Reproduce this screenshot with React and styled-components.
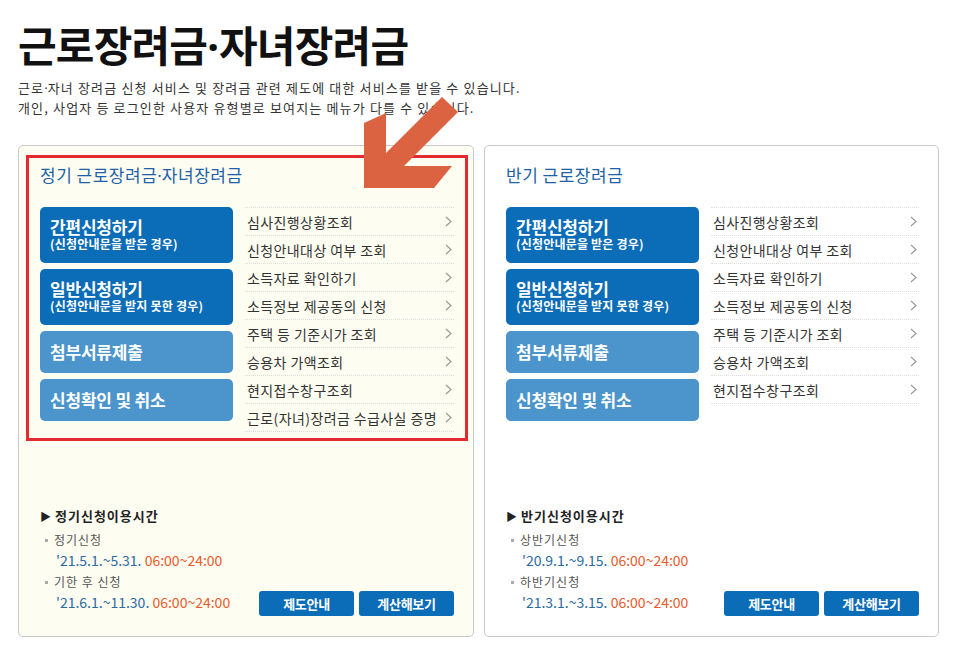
import React from 'react'
import styled, { createGlobalStyle } from 'styled-components'

const GlobalStyle = createGlobalStyle`
  body {
    margin: 0;
    background: #fff;
    font-family: "Noto Sans CJK KR", "Noto Sans", sans-serif;
    color: #333;
  }
`

const cards = [
  {
    title: ['정기 근로장려금', '자녀장려금'],
    bg: '#fefdf1',
    highlight: true,
    links: [
      '심사진행상황조회',
      '신청안내대상 여부 조회',
      '소득자료 확인하기',
      '소득정보 제공동의 신청',
      '주택 등 기준시가 조회',
      '승용차 가액조회',
      '현지접수창구조회',
      '근로(자녀)장려금 수급사실 증명',
    ],
    infoTitle: '정기신청이용시간',
    periods: [
      { label: '정기신청', date: "'21.5.1.~5.31.", time: '06:00~24:00' },
      { label: '기한 후 신청', date: "'21.6.1.~11.30.", time: '06:00~24:00' },
    ],
  },
  {
    title: ['반기 근로장려금'],
    bg: '#fff',
    links: [
      '심사진행상황조회',
      '신청안내대상 여부 조회',
      '소득자료 확인하기',
      '소득정보 제공동의 신청',
      '주택 등 기준시가 조회',
      '승용차 가액조회',
      '현지접수창구조회',
    ],
    infoTitle: '반기신청이용시간',
    periods: [
      { label: '상반기신청', date: "'20.9.1.~9.15.", time: '06:00~24:00' },
      { label: '하반기신청', date: "'21.3.1.~3.15.", time: '06:00~24:00' },
    ],
  },
]

// joins parts with a narrow latin middle dot (the CJK one is full width)
function Dotted({ parts }) {
  return parts.map((p, i) => (
    <React.Fragment key={i}>
      {i > 0 && <Dot>·</Dot>}
      {p}
    </React.Fragment>
  ))
}

function Chevron() {
  return (
    <svg width="7" height="11" viewBox="0 0 7 11">
      <polyline points="1,1 6,5.5 1,10" fill="none" stroke="#9a9a9a" strokeWidth="1.2" />
    </svg>
  )
}

function Card({ card }) {
  return (
    <CardBox bg={card.bg}>
      {card.highlight && <Highlight />}
      <CardTitle>
        <Dotted parts={card.title} />
      </CardTitle>
      <Body>
        <Actions>
          <ActionBtn tall>
            <strong>간편신청하기</strong>
            <small>(신청안내문을 받은 경우)</small>
          </ActionBtn>
          <ActionBtn tall>
            <strong>일반신청하기</strong>
            <small>(신청안내문을 받지 못한 경우)</small>
          </ActionBtn>
          <ActionBtn light>
            <strong>첨부서류제출</strong>
          </ActionBtn>
          <ActionBtn light>
            <strong>신청확인 및 취소</strong>
          </ActionBtn>
        </Actions>
        <LinkList>
          {card.links.map((l) => (
            <li key={l}>
              <span>{l}</span>
              <Chevron />
            </li>
          ))}
        </LinkList>
      </Body>
      <Bottom>
        <Info>
          <InfoTitle>
            <span>▶</span>
            {card.infoTitle}
          </InfoTitle>
          {card.periods.map((p) => (
            <Period key={p.label}>
              <PeriodLabel>{p.label}</PeriodLabel>
              <PeriodDate>
                {p.date} <em>{p.time}</em>
              </PeriodDate>
            </Period>
          ))}
        </Info>
        <SmallButtons>
          <SmallBtn>제도안내</SmallBtn>
          <SmallBtn>계산해보기</SmallBtn>
        </SmallButtons>
      </Bottom>
    </CardBox>
  )
}

export default function App() {
  return (
    <Page>
      <GlobalStyle />
      <Title>
        <Dotted parts={['근로장려금', '자녀장려금']} />
      </Title>
      <Intro>
        근로<Dot>·</Dot>자녀 장려금 신청 서비스 및 장려금 관련 제도에 대한 서비스를 받을 수 있습니다.
        <br />
        개인, 사업자 등 로그인한 사용자 유형별로 보여지는 메뉴가 다를 수 있습니다.
      </Intro>
      <Cards>
        {cards.map((c) => (
          <Card key={c.infoTitle} card={c} />
        ))}
      </Cards>
      <Arrow viewBox="0 0 100 95" width="100" height="95">
        <polygon
          points="2,93 72,93 90,71 42,71 96,17 80,2 24,58 24,18 2,28"
          fill="#dc6342"
        />
      </Arrow>
    </Page>
  )
}

const Page = styled.div`
  position: relative;
  width: 960px;
  box-sizing: border-box;
  padding: 18px 0 0 18px;
`

const Dot = styled.span`
  font-family: "Noto Sans", "DejaVu Sans", sans-serif;
  letter-spacing: 0;
  line-height: 0;
`

const Title = styled.h1`
  margin: 0;
  height: 52px;
  font-size: 42px;
  line-height: 52px;
  font-weight: 700;
  color: #111;
  letter-spacing: -0.8px;
`

const Intro = styled.p`
  margin: 8px 0 0;
  font-size: 13px;
  line-height: 20px;
  color: #333;
  letter-spacing: 1.15px;
`

const Cards = styled.div`
  display: flex;
  gap: 10px;
  margin-top: 27px;
`

const CardBox = styled.div`
  position: relative;
  width: 456px;
  height: 492px;
  box-sizing: border-box;
  border: 1px solid #c9c9c9;
  border-radius: 5px;
  background: ${(p) => p.bg};
  padding: 0 19px 20px 21px;
  display: flex;
  flex-direction: column;
  & + & {
    width: 455px;
  }
`

const Highlight = styled.div`
  position: absolute;
  left: 7px;
  top: 9px;
  width: 442px;
  height: 286px;
  box-sizing: border-box;
  border: 3px solid #e42a2e;
  pointer-events: none;
`

const CardTitle = styled.h2`
  margin: 18px 0 0;
  height: 22px;
  font-size: 17px;
  line-height: 22px;
  font-weight: 400;
  color: #1d62a8;
  letter-spacing: 0.5px;
`

const Body = styled.div`
  display: grid;
  grid-template-columns: 193px 1fr;
  gap: 12px;
  margin-top: 21px;
  align-items: start;
`

const Actions = styled.div`
  display: flex;
  flex-direction: column;
  gap: 6px;
`

const ActionBtn = styled.button`
  display: flex;
  flex-direction: column;
  justify-content: center;
  align-items: flex-start;
  height: ${(p) => (p.tall ? '56px' : '42px')};
  padding: 0 10px;
  border: 0;
  border-radius: 5px;
  background: ${(p) => (p.light ? '#4b94cc' : '#0b6cb7')};
  color: #fff;
  font-family: inherit;
  text-align: left;
  strong {
    font-size: 17px;
    line-height: 18px;
    font-weight: 700;
    letter-spacing: -0.2px;
  }
  small {
    font-size: 12px;
    line-height: 16px;
    font-weight: 700;
    letter-spacing: 0.2px;
  }
`

const LinkList = styled.ul`
  list-style: none;
  margin: 0;
  padding: 0;
  border-top: 1px dotted #ddd;
  li {
    display: flex;
    align-items: center;
    justify-content: space-between;
    height: 27px;
    padding: 0 2px;
    border-bottom: 1px dotted #ddd;
    font-size: 14px;
    letter-spacing: 0.4px;
    white-space: nowrap;
    color: #333;
  }
`

const Bottom = styled.div`
  margin-top: auto;
  display: flex;
  align-items: flex-end;
  justify-content: space-between;
`

const Info = styled.div`
  padding-bottom: 4px;
`

const InfoTitle = styled.div`
  font-size: 13px;
  line-height: 20px;
  font-weight: 700;
  color: #222;
  letter-spacing: 1px;
  span {
    font-size: 11px;
    margin-right: 4px;
    letter-spacing: 0;
  }
`

const Period = styled.div`
  margin-top: 4px;
  & + & {
    margin-top: 2px;
  }
`

const PeriodLabel = styled.div`
  position: relative;
  padding-left: 14px;
  font-size: 12px;
  line-height: 20px;
  color: #555;
  letter-spacing: 1px;
  &::before {
    content: '';
    position: absolute;
    left: 5px;
    top: 9px;
    width: 3px;
    height: 3px;
    background: #aaa;
  }
`

const PeriodDate = styled.div`
  padding-left: 16px;
  font-size: 14px;
  line-height: 20px;
  color: #2b6aa3;
  em {
    font-style: normal;
    color: #ea5a2b;
  }
`

const SmallButtons = styled.div`
  display: flex;
  gap: 5px;
`

const SmallBtn = styled.button`
  width: 95px;
  height: 25px;
  border: 0;
  border-radius: 3px;
  background: #0b6cb7;
  color: #fff;
  font-family: inherit;
  font-size: 13px;
  font-weight: 700;
  letter-spacing: -0.3px;
`

const Arrow = styled.svg`
  position: absolute;
  left: 362px;
  top: 95px;
`
